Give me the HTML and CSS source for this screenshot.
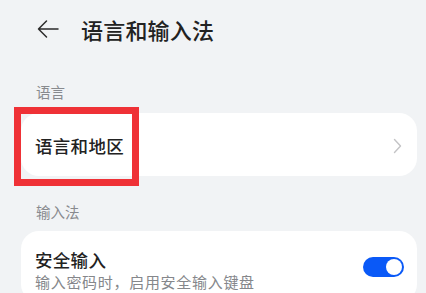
FILE: index.html
```html
<!DOCTYPE html>
<html lang="zh-CN">
<head>
    <meta charset="UTF-8">
    <meta name="viewport" content="width=device-width, initial-scale=1.0">
    <title>语言和输入法</title>
    <link rel="stylesheet" href="styles.css">
</head>
<body>
    <div class="page">
        <header class="topbar">
            <svg class="back" width="24" height="20" viewBox="0 0 24 20">
                <path d="M22 10 H2.5 M10.5 2 L2.5 10 L10.5 18" fill="none" stroke="#2a2a2a" stroke-width="1.5" stroke-linecap="round" stroke-linejoin="round"/>
            </svg>
            <h1>语言和输入法</h1>
        </header>

        <div class="section-label first">语言</div>
        <div class="card card-link">
            <span class="item-title">语言和地区</span>
            <svg class="chevron" width="9" height="16" viewBox="0 0 9 16">
                <path d="M1.5 1.5 L7.5 8 L1.5 14.5" fill="none" stroke="#c4c4c6" stroke-width="1.4" stroke-linecap="round" stroke-linejoin="round"/>
            </svg>
            <div class="highlight"></div>
        </div>

        <div class="section-label">输入法</div>
        <div class="card card-switch">
            <div class="item-text">
                <div class="item-title">安全输入</div>
                <div class="item-sub">输入密码时，启用安全输入键盘</div>
            </div>
            <div class="switch on"><span class="knob"></span></div>
        </div>
    </div>
</body>
</html>
```

FILE: styles.css
```css
body {
    margin: 0;
    background-color: #f1f3f5;
    font-family: 'Noto Sans CJK SC', 'Noto Sans', sans-serif;
    color: #222;
}
.page {
    width: 426px;
    height: 293px;
    overflow: hidden;
}
.topbar {
    height: 58px;
    display: flex;
    align-items: center;
    padding-left: 36px;
}
.back {
    display: block;
    margin-top: -1px;
}
.topbar h1 {
    margin: 0 0 0 21px;
    font-size: 22px;
    font-weight: 500;
    line-height: 28px;
    letter-spacing: 0.2px;
}
.section-label {
    margin: 24px 0 7px 36px;
    font-size: 14.5px;
    line-height: 24px;
    color: #888a8e;
}
.section-label.first {
    margin-top: 22px;
    margin-bottom: 9px;
}
.card {
    position: relative;
    margin: 0 9px 0 21px;
    background-color: #fff;
    border-radius: 18px;
}
.card-link {
    height: 63px;
    display: flex;
    align-items: center;
    justify-content: space-between;
    padding: 0 15px 0 14px;
    box-sizing: border-box;
}
.item-title {
    font-size: 17.5px;
    font-weight: 500;
    line-height: 24px;
    letter-spacing: 0.3px;
}
.card-link .item-title {
    margin-top: 3px;
}
.chevron {
    display: block;
    margin-top: 2px;
}
.highlight {
    position: absolute;
    left: -7px;
    top: -6px;
    width: 111px;
    height: 65px;
    border: 7px solid #ef3136;
}
.card-switch {
    display: flex;
    justify-content: space-between;
    align-items: flex-start;
    padding: 17px 13px 10px 14px;
}
.item-sub {
    font-size: 15px;
    line-height: 20px;
    color: #85878b;
    letter-spacing: 0.7px;
}
.switch {
    width: 41px;
    height: 20px;
    margin-top: 9px;
    border-radius: 10px;
    background-color: #0a59f7;
    position: relative;
}
.knob {
    position: absolute;
    right: 2px;
    top: 2px;
    width: 16px;
    height: 16px;
    border-radius: 50%;
    background-color: #fff;
}
```
